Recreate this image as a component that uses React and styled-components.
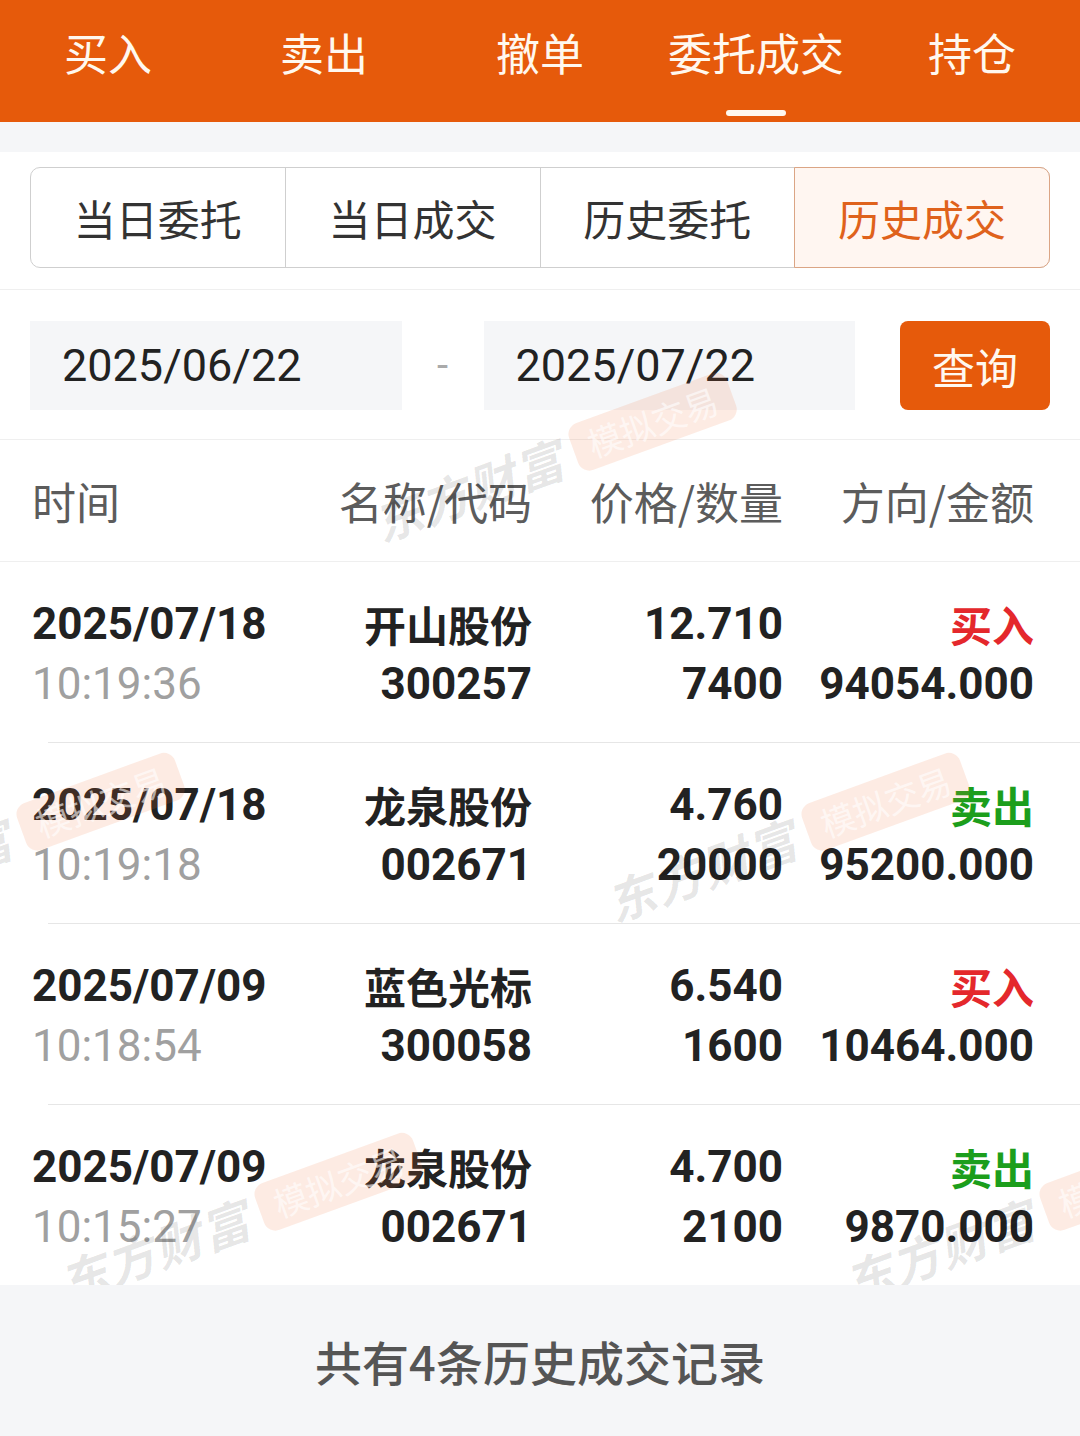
import React from "react"
import styled, { createGlobalStyle } from "styled-components"

const ORANGE = "#e65a0b"

const tabs = ["买入", "卖出", "撤单", "委托成交", "持仓"]
const segments = ["当日委托", "当日成交", "历史委托", "历史成交"]

const trades = [
  { date: "2025/07/18", time: "10:19:36", name: "开山股份", code: "300257", price: "12.710", qty: "7400", side: "buy", amount: "94054.000" },
  { date: "2025/07/18", time: "10:19:18", name: "龙泉股份", code: "002671", price: "4.760", qty: "20000", side: "sell", amount: "95200.000" },
  { date: "2025/07/09", time: "10:18:54", name: "蓝色光标", code: "300058", price: "6.540", qty: "1600", side: "buy", amount: "10464.000" },
  { date: "2025/07/09", time: "10:15:27", name: "龙泉股份", code: "002671", price: "4.700", qty: "2100", side: "sell", amount: "9870.000" },
]

// watermark centres, relative to the white content area
const marks = [
  { x: 553, y: 306 },
  { x: -232, y: 306 },
  { x: 1, y: 686 },
  { x: 786, y: 686 },
  { x: 239, y: 1066 },
  { x: 1024, y: 1066 },
]

export default function App() {
  return (
    <>
      <GlobalStyle />
      <Page>
        <TopBar>
          {tabs.map((t, i) => (
            <Tab key={t}>
              <TabLabel>{t}</TabLabel>
              <TabLine $active={i === 3} />
            </Tab>
          ))}
        </TopBar>
        <Gap />
        <Main>
          <SegmentBar>
            <Segments>
              {segments.map((s, i) => (
                <Segment key={s} $active={i === 3}>
                  {s}
                </Segment>
              ))}
            </Segments>
          </SegmentBar>
          <DateBar>
            <DateInput>2025/06/22</DateInput>
            <Dash>-</Dash>
            <DateInput>2025/07/22</DateInput>
            <QueryButton>查询</QueryButton>
          </DateBar>
          <HeadRow>
            <HeadCell>时间</HeadCell>
            <HeadCell $right>名称/代码</HeadCell>
            <HeadCell $right>价格/数量</HeadCell>
            <HeadCell $right>方向/金额</HeadCell>
          </HeadRow>
          {trades.map((t, i) => (
            <React.Fragment key={i}>
              {i > 0 && <Divider />}
              <Row>
                <Cell>
                  <Strong>{t.date}</Strong>
                  <Muted>{t.time}</Muted>
                </Cell>
                <Cell $right>
                  <Name>{t.name}</Name>
                  <Strong>{t.code}</Strong>
                </Cell>
                <Cell $right>
                  <Strong>{t.price}</Strong>
                  <Strong>{t.qty}</Strong>
                </Cell>
                <Cell $right>
                  <Side $side={t.side}>{t.side === "buy" ? "买入" : "卖出"}</Side>
                  <Strong>{t.amount}</Strong>
                </Cell>
              </Row>
            </React.Fragment>
          ))}
          <WatermarkLayer>
            {marks.map((m, i) => (
              <Mark key={i} style={{ left: m.x, top: m.y }}>
                <Brand>东方财富</Brand>
                <Badge>模拟交易</Badge>
              </Mark>
            ))}
          </WatermarkLayer>
        </Main>
        <Footer>共有4条历史成交记录</Footer>
      </Page>
    </>
  )
}

const GlobalStyle = createGlobalStyle`
  html, body {
    margin: 0;
    padding: 0;
    background: #f5f6f8;
    font-family: Roboto, "Noto Sans CJK SC", sans-serif;
  }
`
const Page = styled.div`
  width: 1080px;
  min-height: 1436px;
  background: #f5f6f8;
`
const TopBar = styled.div`
  display: flex;
  height: 122px;
  background: ${ORANGE};
`
const Tab = styled.div`
  flex: 1;
  display: flex;
  flex-direction: column;
  align-items: center;
  padding-top: 22px;
`
const TabLabel = styled.div`
  font-family: "Noto Sans CJK SC", sans-serif;
  font-size: 44px;
  line-height: 60px;
  color: #fff8ef;
`
const TabLine = styled.div`
  margin-top: 28px;
  width: 60px;
  height: 6px;
  border-radius: 3px;
  background: ${(p) => (p.$active ? "#fff8ef" : "transparent")};
`
const Gap = styled.div`
  height: 30px;
`
const Main = styled.div`
  position: relative;
  background: #fff;
`
const SegmentBar = styled.div`
  padding: 15px 30px 21px;
  border-bottom: 1px solid #efefef;
`
const Segments = styled.div`
  display: flex;
  height: 99px;
  border: 1px solid #cfcfcf;
  border-radius: 10px;
`
const Segment = styled.div`
  flex: 1;
  display: flex;
  align-items: center;
  justify-content: center;
  font-family: "Noto Sans CJK SC", sans-serif;
  font-size: 42px;
  color: ${(p) => (p.$active ? "#df621c" : "#333")};
  background: ${(p) => (p.$active ? "#fff6f1" : "transparent")};
  & + & {
    border-left: 1px solid #cfcfcf;
  }
  ${(p) =>
    p.$active &&
    `
    margin: -1px -1px -1px 0;
    border: 1px solid #dba585 !important;
    border-radius: 0 10px 10px 0;
  `}
`
const DateBar = styled.div`
  display: flex;
  align-items: center;
  padding: 31px 30px 29px;
  border-bottom: 1px solid #efefef;
`
const DateInput = styled.div`
  flex: 1;
  height: 89px;
  display: flex;
  align-items: center;
  padding-left: 32px;
  background: #f5f6f8;
  font-size: 45px;
  color: #222;
`
const Dash = styled.div`
  width: 82px;
  text-align: center;
  font-size: 40px;
  color: #aaa;
`
const QueryButton = styled.div`
  width: 150px;
  height: 89px;
  margin-left: 45px;
  display: flex;
  align-items: center;
  justify-content: center;
  border-radius: 8px;
  background: ${ORANGE};
  color: #fff8ef;
  font-family: "Noto Sans CJK SC", sans-serif;
  font-size: 43px;
`
const columns = `
  display: grid;
  grid-template-columns: 1fr 251px 251px 251px;
  padding: 0 46px 0 32px;
`
const HeadRow = styled.div`
  ${columns}
  align-items: center;
  height: 121px;
  border-bottom: 1px solid #efefef;
`
const HeadCell = styled.div`
  font-family: "Noto Sans CJK SC", sans-serif;
  font-size: 44px;
  color: #5c5c5c;
  text-align: ${(p) => (p.$right ? "right" : "left")};
`
const Row = styled.div`
  ${columns}
  height: 180px;
  box-sizing: border-box;
  padding-top: 32px;
`
const Divider = styled.div`
  height: 1px;
  margin-left: 48px;
  background: #e6e6e6;
`
const Cell = styled.div`
  display: flex;
  flex-direction: column;
  align-items: ${(p) => (p.$right ? "flex-end" : "flex-start")};
`
const Strong = styled.div`
  font-size: 44px;
  font-weight: 700;
  line-height: 60px;
  color: #222;
`
const Muted = styled.div`
  font-size: 44px;
  line-height: 60px;
  color: #a0a0a0;
`
const Name = styled.div`
  font-family: "Noto Sans CJK SC", sans-serif;
  font-size: 42px;
  font-weight: 700;
  line-height: 60px;
  color: #222;
`
const Side = styled(Name)`
  color: ${(p) => (p.$side === "buy" ? "#e4282c" : "#1c9e1c")};
`
const WatermarkLayer = styled.div`
  position: absolute;
  inset: 0;
  overflow: hidden;
  pointer-events: none;
`
const Mark = styled.div`
  position: absolute;
  display: flex;
  align-items: center;
  gap: 12px;
  white-space: nowrap;
  transform: translate(-50%, -50%) rotate(-20deg);
`
const Brand = styled.div`
  font-family: "Noto Sans CJK SC", sans-serif;
  font-size: 48px;
  font-weight: 700;
  font-style: italic;
  letter-spacing: 2px;
  color: rgba(0, 0, 0, 0.1);
`
const Badge = styled.div`
  padding: 2px 16px;
  border-radius: 12px;
  background: rgba(238, 110, 55, 0.14);
  font-family: "Noto Sans CJK SC", sans-serif;
  font-size: 34px;
  line-height: 46px;
  color: rgba(255, 255, 255, 0.6);
`
const Footer = styled.div`
  height: 150px;
  display: flex;
  align-items: center;
  justify-content: center;
  font-family: "Noto Sans CJK SC", sans-serif;
  font-size: 47px;
  font-weight: 500;
  color: #555;
`
